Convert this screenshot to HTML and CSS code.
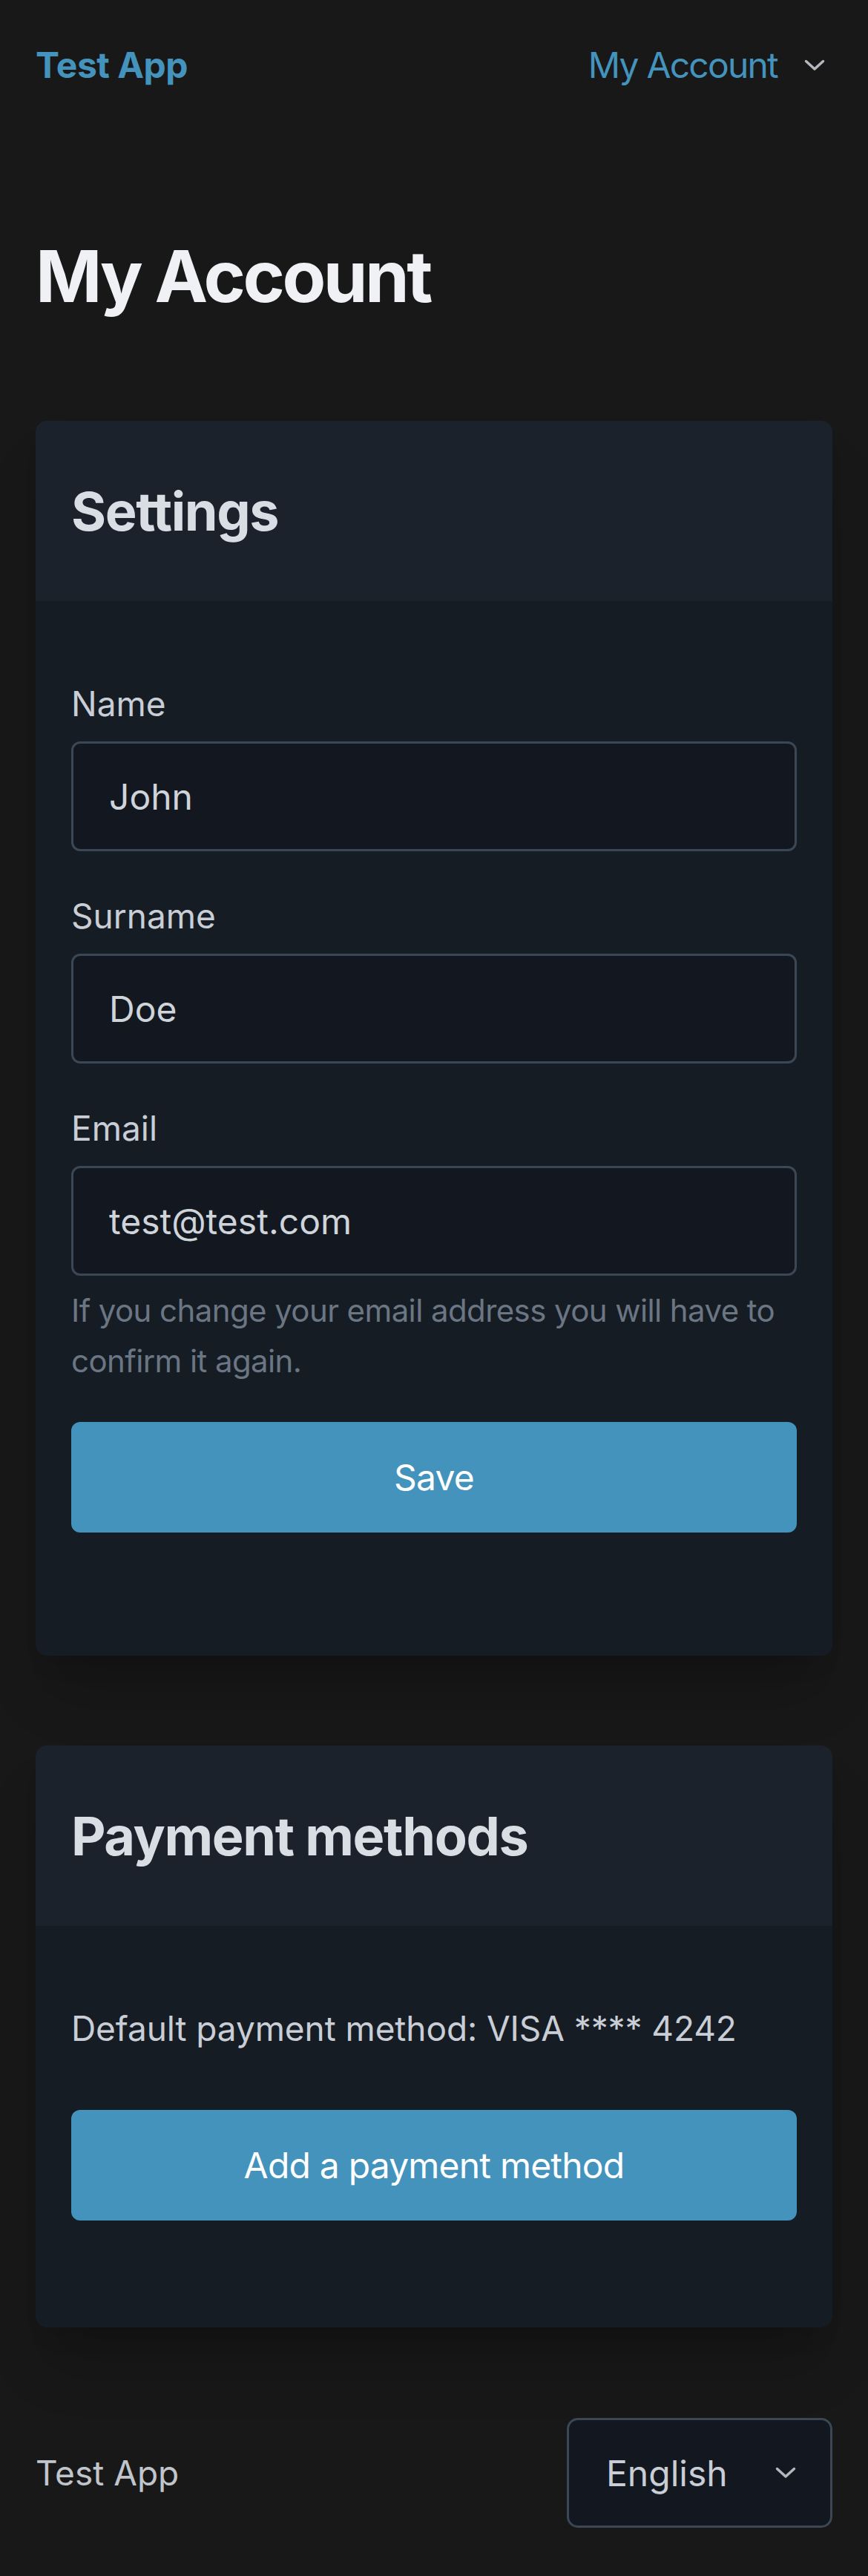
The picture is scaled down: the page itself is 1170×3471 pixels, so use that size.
FILE: index.html
```html
<!DOCTYPE html>
<html lang="en">
<head>
<meta charset="utf-8">
<title>My Account - Test App</title>
<link rel="stylesheet" href="styles.css">
</head>
<body>
<div class="page">
  <header class="topbar">
    <a class="brand" href="#">Test App</a>
    <button class="nav-menu" type="button">
      <span>My Account</span>
      <svg class="chev" viewBox="0 0 28 16" width="28" height="16" aria-hidden="true"><polyline points="2.5,2.5 14,13 25.5,2.5" /></svg>
    </button>
  </header>

  <main>
    <h1 class="title">My Account</h1>

    <section class="card">
      <div class="card-head"><h2>Settings</h2></div>
      <div class="card-body card-body--form">
        <div class="field">
          <label class="label" for="name">Name</label>
          <div class="input" id="name">John</div>
        </div>
        <div class="field">
          <label class="label" for="surname">Surname</label>
          <div class="input" id="surname">Doe</div>
        </div>
        <div class="field">
          <label class="label" for="email">Email</label>
          <div class="input" id="email">test@test.com</div>
          <p class="hint">If you change your email address you will have to confirm it again.</p>
        </div>
        <button class="btn btn--save" type="button">Save</button>
      </div>
    </section>

    <section class="card card--second">
      <div class="card-head"><h2>Payment methods</h2></div>
      <div class="card-body card-body--pay">
        <p class="text">Default payment method: VISA **** 4242</p>
        <button class="btn btn--add" type="button">Add a payment method</button>
      </div>
    </section>
  </main>

  <footer class="footer">
    <span class="footer-brand">Test App</span>
    <div class="select">
      <span>English</span>
      <svg class="chev" viewBox="0 0 28 16" width="28" height="16" aria-hidden="true"><polyline points="2.5,2.5 14,13 25.5,2.5" /></svg>
    </div>
  </footer>
</div>
</body>
</html>
```
FILE: styles.css
```css
* { box-sizing: border-box; }

html, body {
  margin: 0;
  padding: 0;
  background: #181818;
}

body {
  font-family: Inter, "Noto Sans", "Liberation Sans", sans-serif;
  color: #d1d5db;
}

.page {
  padding: 0 48px;
}

.topbar {
  height: 176px;
  display: flex;
  align-items: center;
  justify-content: space-between;
}

.brand {
  font-size: 48px;
  line-height: 72px;
  font-weight: 700;
  color: #4493bd;
  text-decoration: none;
  letter-spacing: -0.5px;
}

.nav-menu {
  display: flex;
  align-items: center;
  gap: 36px;
  padding: 0 10px 0 0;
  margin: 0;
  border: 0;
  background: none;
  font-family: inherit;
  font-size: 48px;
  line-height: 72px;
  color: #4493bd;
  letter-spacing: -1.8px;
}

.chev {
  display: block;
  fill: none;
  stroke: #b3b8bf;
  stroke-width: 3.5;
  stroke-linecap: round;
  stroke-linejoin: round;
}

.title {
  margin: 136px 0 135px;
  font-size: 96px;
  line-height: 120px;
  font-weight: 700;
  color: #f0f1f4;
  letter-spacing: -3.5px;
}

.card {
  background: #161c23;
  border-radius: 15px;
  overflow: hidden;
  box-shadow: 0 60px 75px -15px rgba(0, 0, 0, 0.18), 0 24px 30px -18px rgba(0, 0, 0, 0.15);
}

.card--second {
  margin-top: 121px;
}

.card-head {
  background: #1b222b;
  padding: 74px 48px 73px;
}

.card-head h2 {
  margin: 0;
  font-size: 72px;
  line-height: 96px;
  font-weight: 700;
  color: #d9dde4;
  letter-spacing: -1.4px;
}

.card-body {
  padding: 105px 48px 166px;
}

.card-body--pay {
  padding-bottom: 144px;
}

.field + .field {
  margin-top: 54px;
}

.label {
  display: block;
  font-size: 46px;
  line-height: 66px;
  color: #c9ced6;
  margin-bottom: 18px;
}

.input {
  height: 148px;
  display: flex;
  align-items: center;
  padding: 0 48px;
  background: #131820;
  border: 3px solid #3b4754;
  border-radius: 12px;
  font-size: 48px;
  color: #cfd4db;
}

.hint {
  margin: 13px 0 0;
  font-size: 42px;
  line-height: 68px;
  color: #6b7684;
  letter-spacing: -0.6px;
}

.btn {
  display: flex;
  width: 100%;
  height: 149px;
  align-items: center;
  justify-content: center;
  border: 0;
  border-radius: 12px;
  background: #4493bd;
  color: #ffffff;
  font-family: inherit;
  font-size: 48px;
  letter-spacing: -0.8px;
  margin: 0;
  padding: 0;
}

.btn--save {
  margin-top: 48px;
}

.text {
  margin: 0;
  font-size: 46px;
  line-height: 66px;
  color: #c9ced6;
  letter-spacing: -0.1px;
}

.btn--add {
  margin-top: 77px;
}

.footer {
  display: flex;
  align-items: center;
  justify-content: space-between;
  padding: 122px 0 66px;
}

.footer-brand {
  font-size: 46px;
  line-height: 66px;
  color: #c0c5cc;
}

.select {
  width: 358px;
  height: 148px;
  display: flex;
  align-items: center;
  justify-content: space-between;
  padding: 0 46px 0 50px;
  background: #131820;
  border: 3px solid #3b4754;
  border-radius: 15px;
  font-size: 48px;
  color: #c9ced6;
}
```
